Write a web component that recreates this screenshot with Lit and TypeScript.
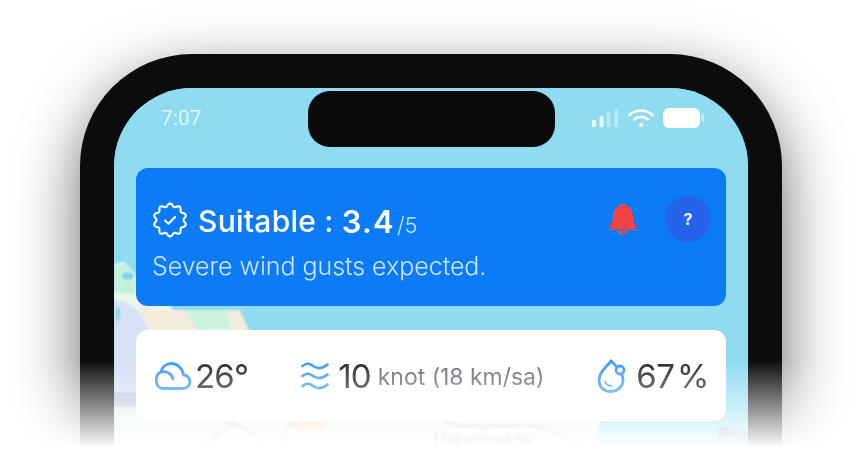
import { LitElement, html, css, svg } from "lit";
import { customElement } from "lit/decorators.js";

function badgePath(cx: number, cy: number, r: number, amp: number, lobes: number) {
  let d = "";
  const n = 180;
  for (let i = 0; i <= n; i++) {
    const t = (i / n) * Math.PI * 2;
    const rr = r + amp * Math.cos(lobes * t);
    const x = cx + rr * Math.sin(t);
    const y = cy - rr * Math.cos(t);
    d += `${i ? "L" : "M"}${x.toFixed(2)} ${y.toFixed(2)}`;
  }
  return d + "Z";
}

@customElement("app-root")
export class AppRoot extends LitElement {
  static styles = css`
    :host {
      display: block;
      position: relative;
      width: 862px;
      height: 460px;
      overflow: hidden;
      background: #fff;
      padding: 54px 0 0 80px;
      box-sizing: border-box;
      font-family: "Inter", "Liberation Sans", sans-serif;
    }
    .phone {
      width: 702px;
      height: 520px;
      box-sizing: border-box;
      border: 34px solid #0c0c0e;
      border-bottom: 0;
      border-radius: 112px 112px 0 0;
      box-shadow: 0 22px 62px rgba(0, 0, 0, 0.6);
      background: #0c0c0e;
    }
    .screen {
      position: relative;
      height: 100%;
      overflow: hidden;
      border-radius: 78px 78px 0 0;
      background: #8fdbf0;
    }
    .map {
      position: absolute;
      inset: 0;
      width: 634px;
      height: 432px;
      filter: blur(1.2px);
    }
    .content {
      position: relative;
      padding: 0 22px;
      filter: blur(0.55px);
    }
    .status {
      height: 80px;
      box-sizing: border-box;
      padding: 10px 22px 0 25px;
      display: flex;
      justify-content: space-between;
      align-items: flex-start;
      color: rgba(255, 255, 255, 0.72);
      font: 400 21px/40px "Roboto", sans-serif;
    }
    .sys {
      display: flex;
      align-items: center;
      height: 40px;
      gap: 9px;
    }
    .sys svg {
      display: block;
    }
    .island {
      position: absolute;
      left: 194px;
      top: 3px;
      width: 247px;
      height: 56px;
      border-radius: 22px;
      background: #0a0a0c;
    }
    .alert {
      height: 138px;
      box-sizing: border-box;
      border-radius: 12px;
      background: #0b7bf8;
      padding: 28px 15px 0 16px;
      display: flex;
      justify-content: space-between;
      color: #fff;
    }
    .title {
      display: flex;
      align-items: center;
      height: 50px;
    }
    .title svg {
      flex: none;
      margin: -3px 10px 0 0;
    }
    .suit {
      font-size: 30px;
      font-weight: 500;
      letter-spacing: 0.25px;
    }
    .score {
      font-size: 31px;
      font-weight: 600;
      letter-spacing: 1.2px;
      margin-left: 8px;
    }
    .max {
      font-size: 22px;
      font-weight: 300;
      color: rgba(255, 255, 255, 0.78);
      margin: 7px 0 0 2px;
    }
    .sub {
      font-size: 25px;
      font-weight: 300;
      line-height: 30px;
      color: rgba(255, 255, 255, 0.8);
      margin-top: 5px;
      letter-spacing: -0.03px;
    }
    .actions {
      display: flex;
      gap: 28px;
      align-items: flex-start;
    }
    .bell {
      display: block;
      margin-top: 7px;
    }
    .help {
      width: 46px;
      height: 46px;
      border-radius: 50%;
      background: #2563eb;
      display: flex;
      align-items: center;
      justify-content: center;
      font-size: 16px;
      font-weight: 700;
      color: rgba(255, 255, 255, 0.95);
    }
    .stats {
      margin-top: 24px;
      height: 91px;
      box-sizing: border-box;
      border-radius: 12px;
      background: #fff;
      padding: 0 17px 0 19px;
      display: flex;
      justify-content: space-between;
      align-items: center;
      color: #2a2a2a;
    }
    .stat {
      display: flex;
      align-items: center;
    }
    .big {
      font-size: 33px;
      font-weight: 400;
      line-height: 40px;
      letter-spacing: -0.8px;
    }
    .pct {
      word-spacing: -6px;
      letter-spacing: -0.5px;
    }
    .unit {
      font-size: 23px;
      color: #666d78;
      margin: 3px 0 0 7px;
      letter-spacing: -0.03px;
    }
    .stat svg {
      display: block;
      flex: none;
    }
    .cloud {
      margin-right: 4px;
    }
    .waves {
      margin-right: 9px;
    }
    .drop {
      margin-right: 9px;
    }
    .fade {
      position: absolute;
      left: 0;
      right: 0;
      top: 360px;
      height: 100px;
      background: linear-gradient(rgba(255, 255, 255, 0), #fff 88px);
    }
  `;

  private mapArt() {
    return svg`
      <rect width="634" height="432" fill="#8fdbf0"/>
      <path d="M0 176 L10 174 L30 195 L60 222 L124 222 L136 245 L150 330 L486 332 C480 360 470 372 500 432 L0 432 Z" fill="#e9f8ea"/>
      <path d="M0 178 L14 176 L24 200 L20 206 L0 204 Z" fill="#c3f1dc"/>
      <path d="M18 196 L40 222 L80 222 L90 242 L30 242 L24 212Z" fill="#f2ecdd"/>
      <path d="M72 222 L112 222 L118 242 L82 242Z" fill="#cdf3dd"/>
      <path d="M112 222 L126 222 L136 245 L122 245Z" fill="#f2ecdd"/>
      <path d="M0 212 C14 212 28 224 34 242 L40 306 L0 306 Z" fill="#d6e2f5"/>
      <rect x="0" y="304" width="40" height="15" fill="#b9c5dc"/>
      <rect x="0" y="319" width="30" height="8" fill="#e4eee8"/>
      <ellipse cx="14" cy="188" rx="6" ry="3.5" fill="#7fd3ea"/>
      <ellipse cx="4" cy="226" rx="2" ry="7" fill="#7fd3ea"/>
      <path d="M176 332 L212 332 L210 340 L194 344 L178 340Z" fill="#fbd7ae"/>
      <g fill="none" stroke="#c8cfe3" stroke-width="3">
        <path d="M110 334 C135 338 155 352 150 385"/>
        <path d="M178 334 C168 350 165 365 168 385"/>
        <path d="M330 334 C370 345 400 332 430 340 C450 346 465 355 480 375"/>
        <path d="M80 372 C92 355 105 345 120 336"/>
      </g>
      <g fill="#fff">
        <ellipse cx="498" cy="400" rx="42" ry="12"/>
        <ellipse cx="545" cy="395" rx="22" ry="16"/>
        <ellipse cx="595" cy="402" rx="40" ry="12"/>
        <ellipse cx="20" cy="402" rx="34" ry="18"/>
      </g>
      <text x="320" y="359" font-family="Roboto, sans-serif" font-size="18" fill="#5f636b">Uskumruköy</text>
      <text x="604" y="353" font-family="Roboto, sans-serif" font-size="18" fill="#5f636b">Riva</text>
    `;
  }

  render() {
    return html`
      <div class="phone">
        <div class="screen">
          <svg class="map" viewBox="0 0 634 432" aria-hidden="true">${this.mapArt()}</svg>
          <div class="content">
            <div class="status">
              <span>7:07</span>
              <div class="sys">
                <svg width="27" height="20" viewBox="0 0 27 20" fill="#fff">
                  <rect x="0" y="12" width="4" height="7" rx="1" opacity=".9"/>
                  <rect x="7.5" y="8" width="4" height="11" rx="1" opacity=".75"/>
                  <rect x="15" y="4" width="3.5" height="15" rx="1" opacity=".4"/>
                  <rect x="22.5" y="1" width="3.5" height="18" rx="1" opacity=".4"/>
                </svg>
                <svg width="26" height="20" viewBox="0 0 26 20" fill="none" stroke="#fff" stroke-width="2.6" stroke-linecap="round">
                  <path d="M1.5 7 C8 1 18 1 24.5 7" opacity=".95"/>
                  <path d="M6 11.5 C10 8 16 8 20 11.5" opacity=".95"/>
                  <circle cx="13" cy="17" r="1.9" fill="#fff" stroke="none"/>
                </svg>
                <svg width="41" height="20" viewBox="0 0 41 20" fill="#fff">
                  <rect x="0" y="0" width="37" height="20" rx="6"/>
                  <rect x="38.5" y="6" width="2.2" height="8" rx="1" opacity=".6"/>
                </svg>
              </div>
            </div>
            <div class="alert">
              <div>
                <div class="title">
                  <svg width="36" height="36" viewBox="0 0 36 36" fill="none" stroke="#fff" stroke-width="2.1" stroke-linejoin="round" stroke-linecap="round">
                    <path d=${badgePath(18, 18, 15, 1.5, 10)}/>
                    <path d="M13 18.5 L16.5 21.8 L23 15"/>
                  </svg>
                  <span class="suit">Suitable :</span>
                  <span class="score">3.4</span>
                  <span class="max">/5</span>
                </div>
                <div class="sub">Severe wind gusts expected.</div>
              </div>
              <div class="actions">
                <svg class="bell" width="28" height="32" viewBox="0 0 28 32">
                  <path d="M14 0.5 C16 0.5 17 2 18 3 C22 4.5 23.5 8 24 13 C24.4 18 25 21 27.5 23.5 C28.5 25 27.5 26.5 26 26.5 L2 26.5 C0.5 26.5 -0.5 25 0.5 23.5 C3 21 3.6 18 4 13 C4.5 8 6 4.5 10 3 C11 2 12 0.5 14 0.5Z" fill="#ef4444"/>
                  <path d="M8.5 27.5 C9.5 31 12 31.5 14 31.5 C16 31.5 18.5 31 19.5 27.5 L16.5 27.5 C16 28.7 12 28.7 11.5 27.5Z" fill="#ef4444"/>
                </svg>
                <div class="help">?</div>
              </div>
            </div>
            <div class="stats">
              <div class="stat">
                <svg class="cloud" width="36" height="28" viewBox="0 0 36 28" fill="none" stroke="#3b9bff" stroke-width="2.8" stroke-linecap="round" stroke-linejoin="round">
                  <path d="M8 26.5 H28 C32 26.5 34.8 23.5 34.8 19.8 C34.8 16 32 13.2 28.5 13 C27.5 6.5 22.5 1.5 16.5 1.5 C11 1.5 7 5 6 9.8 C3 11.3 1.2 14.5 1.2 18 C1.2 22.8 4 26.5 8 26.5Z"/>
                  <path d="M6 10 C11 8.5 17 11.5 18 17"/>
                </svg>
                <span class="big">26°</span>
              </div>
              <div class="stat">
                <svg class="waves" width="28" height="28" viewBox="0 0 28 28" fill="none" stroke="#3b9bff" stroke-width="2.6" stroke-linecap="round">
                  <path d="M1.5 4 C6 0 9 2 13 4.5 C17 7 21 7 26.5 2.5"/>
                  <path d="M1.5 14 C6 10 9 12 13 14.5 C17 17 21 17 26.5 12.5"/>
                  <path d="M1.5 24 C6 20 9 22 13 24.5 C17 27 21 27 26.5 22.5"/>
                </svg>
                <span class="big">10</span><span class="unit">knot (18 km/sa)</span>
              </div>
              <div class="stat">
                <svg class="drop" width="30" height="34" viewBox="0 0 30 34" fill="none" stroke="#3b9bff" stroke-width="2.8" stroke-linecap="round" stroke-linejoin="round">
                  <path d="M14 2 C11 7 2 12 2 21.5 C2 28 7 32.5 13.5 32.5 C20.5 32.5 26 27.5 26 20.5 C26 18.5 25.5 16.5 24.5 15"/>
                  <path d="M14 2 C16 4 18 5.5 19.5 7.5"/>
                  <circle cx="23" cy="11" r="4"/>
                  <path d="M8 22.5 C9 25.5 11.5 27 15 27" stroke-width="1.6"/>
                </svg>
                <span class="big pct">67 %</span>
              </div>
            </div>
          </div>
          <div class="island"></div>
        </div>
      </div>
      <div class="fade"></div>
    `;
  }
}
